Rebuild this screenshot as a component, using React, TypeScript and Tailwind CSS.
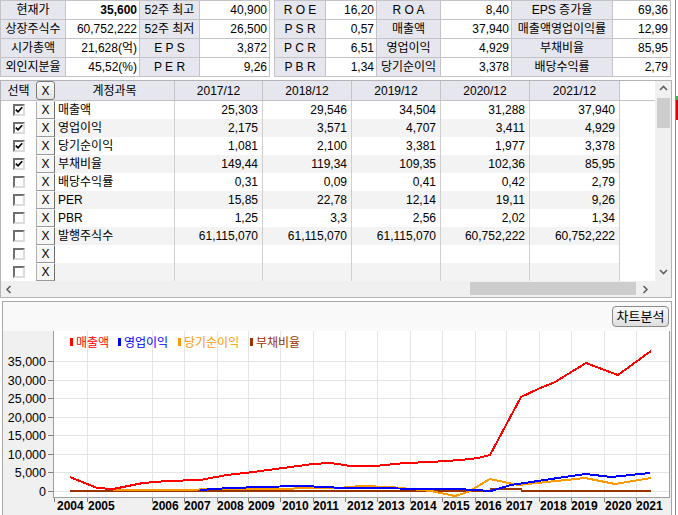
import React from 'react';

const FONT = 'font-[family-name:Liberation_Sans,Noto_Sans_CJK_KR,sans-serif]';

const summaryLeft = [
  ['현재가', '35,600', '52주 최고', '40,900'],
  ['상장주식수', '60,752,222', '52주 최저', '26,500'],
  ['시가총액', '21,628(억)', 'E P S', '3,872'],
  ['외인지분율', '45,52(%)', 'P E R', '9,26'],
];

const summaryRight = [
  ['R O E', '16,20', 'R O A', '8,40', 'EPS 증가율', '69,36'],
  ['P S R', '0,57', '매출액', '37,940', '매출액영업이익률', '12,99'],
  ['P C R', '6,51', '영업이익', '4,929', '부채비율', '85,95'],
  ['P B R', '1,34', '당기순이익', '3,378', '배당수익률', '2,79'],
];

const years = ['2017/12', '2018/12', '2019/12', '2020/12', '2021/12'];
const yearW = ['w-[88px]', 'w-[89px]', 'w-[89px]', 'w-[89px]', 'w-[90px]'];

const rows: { checked: boolean; name: string; v: string[] }[] = [
  { checked: true, name: '매출액', v: ['25,303', '29,546', '34,504', '31,288', '37,940'] },
  { checked: true, name: '영업이익', v: ['2,175', '3,571', '4,707', '3,411', '4,929'] },
  { checked: true, name: '당기순이익', v: ['1,081', '2,100', '3,381', '1,977', '3,378'] },
  { checked: true, name: '부채비율', v: ['149,44', '119,34', '109,35', '102,36', '85,95'] },
  { checked: false, name: '배당수익률', v: ['0,31', '0,09', '0,41', '0,42', '2,79'] },
  { checked: false, name: 'PER', v: ['15,85', '22,78', '12,14', '19,11', '9,26'] },
  { checked: false, name: 'PBR', v: ['1,25', '3,3', '2,56', '2,02', '1,34'] },
  { checked: false, name: '발행주식수', v: ['61,115,070', '61,115,070', '61,115,070', '60,752,222', '60,752,222'] },
  { checked: false, name: '', v: ['', '', '', '', ''] },
  { checked: false, name: '', v: ['', '', '', '', ''] },
];

const Chevron = ({ dir }: { dir: 'up' | 'down' | 'left' | 'right' }) => {
  const d = {
    up: 'M1 5 L4.5 1.5 L8 5',
    down: 'M1 2 L4.5 5.5 L8 2',
    left: 'M5.5 1 L2 4.5 L5.5 8',
    right: 'M2.5 1 L6 4.5 L2.5 8',
  }[dir];
  return (
    <svg width="9" height="9" viewBox="0 0 9 9">
      <path d={d} fill="none" stroke="#606060" strokeWidth="1.6" />
    </svg>
  );
};

const CheckBox = ({ checked }: { checked: boolean }) => (
  <span className="flex w-[12px] h-[12px] items-center justify-center bg-white border-2 border-t-[#707070] border-l-[#707070] border-r-[#dcdcdc] border-b-[#dcdcdc]">
    {checked && (
      <svg width="8" height="8" viewBox="0 0 8 8">
        <path d="M0.8 3.6 L3 5.8 L7.2 1.2" fill="none" stroke="#000" strokeWidth="1.7" />
      </svg>
    )}
  </span>
);

// chart geometry (page coords)
const yFor = (v: number) => 491 - (v * 130) / 35000;
const yTicks = [35000, 30000, 25000, 20000, 15000, 10000, 5000, 0];
const vGrid = [87, 152, 184, 217, 248, 280, 313, 345, 377, 410, 442, 475, 506, 539, 571, 604, 636];
const xLabels: [string, number][] = [
  ['2004', 57], ['2005', 88], ['2006', 152], ['2007', 184], ['2008', 217], ['2009', 248],
  ['2010', 282], ['2011', 313], ['2012', 347], ['2013', 378], ['2014', 410], ['2015', 443],
  ['2016', 475], ['2017', 506], ['2018', 540], ['2019', 571], ['2020', 605], ['2021', 636],
];

const red = '70,477 97,488 113,489 143,483 167,481 200,480 227,475 253,472 283,468 313,464 330,463 338,464 350,466 375,466 405,463 431,462 461,460 478,458 490,455 521,397 538,389 555,382 586,363 618,375 651,351';
const blue = '200,490 230,488 263,487 297,486 330,487 338,488 458,489 491,491 511,485 538,481 571,476 586,474 611,477 650,473';
const orange = '113,490 288,489 300,488 338,488 361,486 391,487 431,491 455,496 468,492 490,479 518,485 585,478 615,484 651,478';
const brown = '70,491 490,491 491,489 521,489 522,491 651,491';

const legend: [string, string, number][] = [
  ['매출액', '#ff0000', 70],
  ['영업이익', '#0000ff', 118],
  ['당기순이익', '#ff9900', 178],
  ['부채비율', '#993300', 250],
];

const Chart = () => (
  <svg width="668" height="184" viewBox="3 331 668 184" className="block" shapeRendering="crispEdges">
    <rect x="3" y="331" width="668" height="184" fill="#f0f0f0" />
    <rect x="54" y="331" width="616" height="167" fill="#ffffff" />
    {vGrid.map((x) => (
      <line key={x} x1={x + 0.5} y1="331" x2={x + 0.5} y2="497" stroke="#e4e4e4" />
    ))}
    {yTicks.map((v) => {
      const y = Math.round(yFor(v)) + 0.5;
      return (
        <g key={v}>
          <line x1="54" y1={y} x2="669" y2={y} stroke="#e4e4e4" />
          <line x1="48" y1={y} x2="53" y2={y} stroke="#808080" />
          <text x="46" y={y + 4.5} textAnchor="end" fontSize="12.5" fill="#000" fontFamily="Liberation Sans, sans-serif">
            {v === 0 ? '0' : v.toLocaleString('en-US')}
          </text>
        </g>
      );
    })}
    <line x1="53.5" y1="331" x2="53.5" y2="498" stroke="#a0a0a0" />
    <line x1="53" y1="497.5" x2="670" y2="497.5" stroke="#a0a0a0" />
    <line x1="669.5" y1="331" x2="669.5" y2="498" stroke="#a0a0a0" />
    {[54, ...vGrid].map((x) => (
      <line key={x} x1={x + 0.5} y1="498" x2={x + 0.5} y2="502" stroke="#808080" />
    ))}
    {xLabels.map(([t, x]) => (
      <text key={t} x={x} y="510" fontSize="12" fontWeight="bold" fill="#000" fontFamily="Liberation Sans, sans-serif">
        {t}
      </text>
    ))}
    <polyline points={brown} fill="none" stroke="#993300" strokeWidth="2" />
    <polyline points={orange} fill="none" stroke="#ff9900" strokeWidth="2" />
    <polyline points={blue} fill="none" stroke="#0000ff" strokeWidth="2" />
    <polyline points={red} fill="none" stroke="#ff0000" strokeWidth="2" />
    {legend.map(([t, c, x]) => (
      <g key={t}>
        <rect x={x} y="338" width="3" height="8" fill={c} />
        <text x={x + 6} y="347" fontSize="12" fill={c} fontFamily="Noto Sans CJK KR, sans-serif">
          {t}
        </text>
      </g>
    ))}
  </svg>
);

const LabelCell = ({ w, children }: { w: string; children: React.ReactNode }) => (
  <div className={`${w} h-[18px] bg-[#e6e6ee] flex items-center justify-center whitespace-nowrap`}>{children}</div>
);

const ValueCell = ({ w, bold, children }: { w: string; bold?: boolean; children: React.ReactNode }) => (
  <div className={`${w} h-[18px] bg-white flex items-center justify-end pr-[2px] whitespace-nowrap ${bold ? 'font-bold' : ''}`}>
    {children}
  </div>
);

export default function App() {
  return (
    <div className={`w-[678px] h-[515px] overflow-hidden bg-white flex text-[12px] leading-none text-black ${FONT}`}>
      <div className="w-[672px] flex flex-col">
        {/* summary */}
        <div className="flex">
          <div className="flex flex-col gap-px bg-[#c4c4c8] p-px">
            {summaryLeft.map((r) => (
              <div key={r[0]} className="flex gap-px">
                <LabelCell w="w-[64px]">{r[0]}</LabelCell>
                <ValueCell w="w-[73px]" bold={r[0] === '현재가'}>{r[1]}</ValueCell>
                <LabelCell w="w-[59px]">{r[2]}</LabelCell>
                <ValueCell w="w-[69px]">{r[3]}</ValueCell>
              </div>
            ))}
          </div>
          <div className="w-[4px]" />
          <div className="flex flex-col gap-px bg-[#c4c4c8] p-px">
            {summaryRight.map((r) => (
              <div key={r[0]} className="flex gap-px">
                <LabelCell w="w-[50px]">{r[0]}</LabelCell>
                <ValueCell w="w-[50px]">{r[1]}</ValueCell>
                <LabelCell w="w-[63px]">{r[2]}</LabelCell>
                <ValueCell w="w-[70px]">{r[3]}</ValueCell>
                <LabelCell w="w-[100px]">{r[4]}</LabelCell>
                <ValueCell w="w-[57px]">{r[5]}</ValueCell>
              </div>
            ))}
          </div>
        </div>

        {/* grid */}
        <div className="mt-[3px] border border-[#b4b4b8] flex flex-col">
          <div className="flex">
            <div className="w-[654px] flex flex-col">
              <div className="flex h-[20px] border-b border-[#c4c4c8]">
                <div className="w-[35px] bg-[#e6e6ee] flex items-center justify-center">선택</div>
                <div className="w-[19px] bg-[#e6e6ee] flex items-center justify-center">
                  <div className="w-[19px] h-[19px] rounded-[3px] border border-[#7a7a7a] bg-gradient-to-b from-[#fafafa] to-[#e4e4e4] flex items-center justify-center">X</div>
                </div>
                <div className="w-[120px] bg-[#e6e6ee] border-r border-[#c4c4c8] flex items-center justify-center">계정과목</div>
                {years.map((y, i) => (
                  <div key={y} className={`${yearW[i]} bg-[#e6e6ee] border-r border-[#c4c4c8] flex items-center justify-center`}>
                    {y}
                  </div>
                ))}
                <div className="flex-1 bg-white" />
              </div>
              {rows.map((r, ri) => (
                <div key={ri} className="flex h-[18px]">
                  <div className="w-[35px] flex items-center justify-center">
                    <CheckBox checked={r.checked} />
                  </div>
                  <div className="w-[19px] h-[18px] bg-[#f6f6f6] border border-t-white border-l-[#b0b0b0] border-r-[#6e6e6e] border-b-[#9a9a9a] flex items-center justify-center text-[12px]">
                    X
                  </div>
                  <div className={`flex ${ri % 2 === 1 ? 'bg-[#f3f3f3]' : 'bg-white'}`}>
                    <div className="w-[120px] border-r border-[#cfcfcf] flex items-center pl-[3px] whitespace-nowrap">{r.name}</div>
                    {r.v.map((v, i) => (
                      <div key={i} className={`${yearW[i]} border-r border-[#cfcfcf] flex items-center justify-end pr-[4px]`}>
                        {v}
                      </div>
                    ))}
                  </div>
                  <div className="flex-1 bg-white" />
                </div>
              ))}
            </div>
            <div className="w-[16px] bg-[#f0f0f0] flex flex-col items-center">
              <div className="h-[17px] flex items-center justify-center">
                <Chevron dir="up" />
              </div>
              <div className="w-[13px] h-[30px] bg-[#cdcdcd]" />
              <div className="flex-1" />
              <div className="h-[17px] flex items-center justify-center">
                <Chevron dir="down" />
              </div>
            </div>
          </div>
          <div className="flex h-[16px] bg-[#f0f0f0]">
            <div className="w-[16px] flex items-center justify-center">
              <Chevron dir="left" />
            </div>
            <div className="w-[453px]" />
            <div className="w-[166px] h-[13px] mt-[1px] bg-[#cdcdcd]" />
            <div className="w-[19px] flex items-center justify-center">
              <Chevron dir="right" />
            </div>
            <div className="flex-1" />
          </div>
        </div>

        {/* chart */}
        <div className="mt-[3px] ml-[2px] w-[670px] h-[220px] border border-[#a8a8a8] flex flex-col">
          <div className="h-[29px] bg-[#f9f9f9] flex items-start justify-end pt-[4px] pr-[2px]">
            <button className="w-[57px] h-[21px] rounded-[4px] border border-[#8a8a8a] bg-gradient-to-b from-[#fbfbfb] to-[#dedede] text-[13px] flex items-center justify-center">
              차트분석
            </button>
          </div>
          <Chart />
        </div>
      </div>
      <div className="w-[6px] flex">
        <div className="w-[3px]" />
        <div className="w-[3px] border-l border-[#8c8c8c] flex flex-col">
          <div className="h-[96px]" />
          <div className="h-[4px] bg-[#4caf50]" />
          <div className="h-[20px] bg-[#e00000]" />
        </div>
      </div>
    </div>
  );
}
